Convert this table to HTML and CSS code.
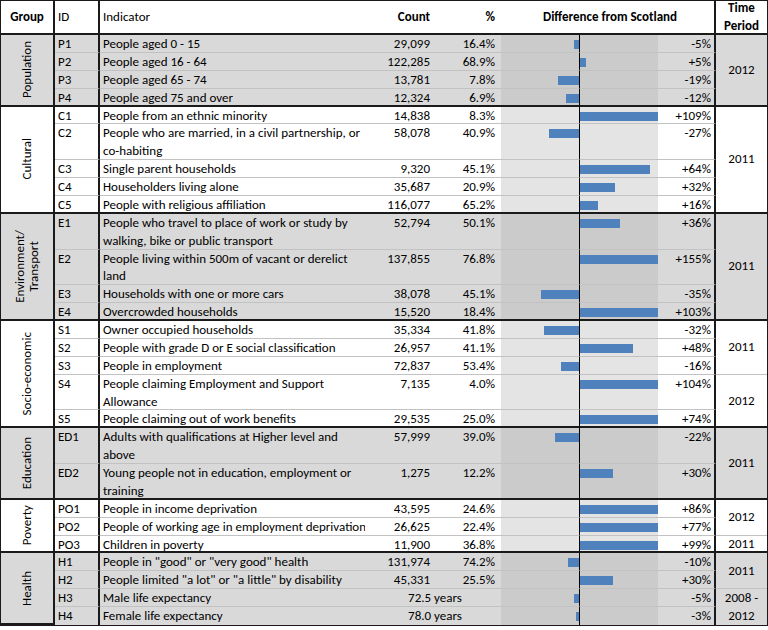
FILE: index.html
```html
<!DOCTYPE html>
<html>
<head>
<meta charset="utf-8">
<link rel="stylesheet" href="styles.css">
</head>
<body>
<div class="tbl">
  <div class="hd hgrp">Group</div>
  <div class="hd hid">ID</div>
  <div class="hd hind">Indicator</div>
  <div class="hd hnum">Count</div>
  <div class="hd hpct">%</div>
  <div class="hd hdiff">Difference from Scotland</div>
  <div class="hd htime">Time<br>Period</div>

  <div class="grp sh">
    <div class="c g" style="grid-row: span 4"><span class="vl">Population</span></div>
    <div class="c id">P1</div><div class="c ind">People aged 0 - 15</div><div class="c num">29,099</div><div class="c pct">16.4%</div><div class="c neg"><i class="bar" style="width:5.5px"></i></div><div class="c pos"></div><div class="c dt">-5%</div>
    <div class="c tp last" style="grid-row: span 4">2012</div>
    <div class="c id">P2</div><div class="c ind">People aged 16 - 64</div><div class="c num">122,285</div><div class="c pct">68.9%</div><div class="c neg"></div><div class="c pos"><i class="bar" style="width:5.5px"></i></div><div class="c dt">+5%</div>
    <div class="c id">P3</div><div class="c ind">People aged 65 - 74</div><div class="c num">13,781</div><div class="c pct">7.8%</div><div class="c neg"><i class="bar" style="width:20.9px"></i></div><div class="c pos"></div><div class="c dt">-19%</div>
    <div class="c id last">P4</div><div class="c ind last">People aged 75 and over</div><div class="c num last">12,324</div><div class="c pct last">6.9%</div><div class="c neg last"><i class="bar" style="width:13.2px"></i></div><div class="c pos last"></div><div class="c dt last">-12%</div>
  </div>

  <div class="grp wh">
    <div class="c g" style="grid-row: span 6"><span class="vl">Cultural</span></div>
    <div class="c id">C1</div><div class="c ind">People from an ethnic minority</div><div class="c num">14,838</div><div class="c pct">8.3%</div><div class="c neg"></div><div class="c pos"><i class="bar" style="width:78px"></i></div><div class="c dt">+109%</div>
    <div class="c tp last" style="grid-row: span 6">2011</div>
    <div class="c id r2">C2</div><div class="c ind r2">People who are married, in a civil partnership, or<br>co-habiting</div><div class="c num r2">58,078</div><div class="c pct r2">40.9%</div><div class="c neg r2"><i class="bar" style="width:29.7px"></i></div><div class="c pos r2"></div><div class="c dt r2">-27%</div>
    <div class="c id">C3</div><div class="c ind">Single parent households</div><div class="c num">9,320</div><div class="c pct">45.1%</div><div class="c neg"></div><div class="c pos"><i class="bar" style="width:70.4px"></i></div><div class="c dt">+64%</div>
    <div class="c id">C4</div><div class="c ind">Householders living alone</div><div class="c num">35,687</div><div class="c pct">20.9%</div><div class="c neg"></div><div class="c pos"><i class="bar" style="width:35.2px"></i></div><div class="c dt">+32%</div>
    <div class="c id last">C5</div><div class="c ind last">People with religious affiliation</div><div class="c num last">116,077</div><div class="c pct last">65.2%</div><div class="c neg last"></div><div class="c pos last"><i class="bar" style="width:17.6px"></i></div><div class="c dt last">+16%</div>
  </div>

  <div class="grp sh">
    <div class="c g" style="grid-row: span 6"><span class="vl">Environment/<br>Transport</span></div>
    <div class="c id r2">E1</div><div class="c ind r2">People who travel to place of work or study by<br>walking, bike or public transport</div><div class="c num r2">52,794</div><div class="c pct r2">50.1%</div><div class="c neg r2"></div><div class="c pos r2"><i class="bar" style="width:39.6px"></i></div><div class="c dt r2">+36%</div>
    <div class="c tp last" style="grid-row: span 6">2011</div>
    <div class="c id r2">E2</div><div class="c ind r2">People living within 500m of vacant or derelict<br>land</div><div class="c num r2">137,855</div><div class="c pct r2">76.8%</div><div class="c neg r2"></div><div class="c pos r2"><i class="bar" style="width:78px"></i></div><div class="c dt r2">+155%</div>
    <div class="c id">E3</div><div class="c ind">Households with one or more cars</div><div class="c num">38,078</div><div class="c pct">45.1%</div><div class="c neg"><i class="bar" style="width:38.5px"></i></div><div class="c pos"></div><div class="c dt">-35%</div>
    <div class="c id last">E4</div><div class="c ind last">Overcrowded households</div><div class="c num last">15,520</div><div class="c pct last">18.4%</div><div class="c neg last"></div><div class="c pos last"><i class="bar" style="width:78px"></i></div><div class="c dt last">+103%</div>
  </div>

  <div class="grp wh">
    <div class="c g" style="grid-row: span 6"><span class="vl">Socio-economic</span></div>
    <div class="c id">S1</div><div class="c ind">Owner occupied households</div><div class="c num">35,334</div><div class="c pct">41.8%</div><div class="c neg"><i class="bar" style="width:35.2px"></i></div><div class="c pos"></div><div class="c dt">-32%</div>
    <div class="c tp" style="grid-row: span 3">2011</div>
    <div class="c id">S2</div><div class="c ind">People with grade D or E social classification</div><div class="c num">26,957</div><div class="c pct">41.1%</div><div class="c neg"></div><div class="c pos"><i class="bar" style="width:52.8px"></i></div><div class="c dt">+48%</div>
    <div class="c id">S3</div><div class="c ind">People in employment</div><div class="c num">72,837</div><div class="c pct">53.4%</div><div class="c neg"><i class="bar" style="width:17.6px"></i></div><div class="c pos"></div><div class="c dt">-16%</div>
    <div class="c id r2">S4</div><div class="c ind r2">People claiming Employment and Support<br>Allowance</div><div class="c num r2">7,135</div><div class="c pct r2">4.0%</div><div class="c neg r2"></div><div class="c pos r2"><i class="bar" style="width:78px"></i></div><div class="c dt r2">+104%</div>
    <div class="c tp last" style="grid-row: span 3">2012</div>
    <div class="c id last">S5</div><div class="c ind last">People claiming out of work benefits</div><div class="c num last">29,535</div><div class="c pct last">25.0%</div><div class="c neg last"></div><div class="c pos last"><i class="bar" style="width:78px"></i></div><div class="c dt last">+74%</div>
  </div>

  <div class="grp sh">
    <div class="c g" style="grid-row: span 4"><span class="vl">Education</span></div>
    <div class="c id r2">ED1</div><div class="c ind r2">Adults with qualifications at Higher level and<br>above</div><div class="c num r2">57,999</div><div class="c pct r2">39.0%</div><div class="c neg r2"><i class="bar" style="width:24.2px"></i></div><div class="c pos r2"></div><div class="c dt r2">-22%</div>
    <div class="c tp last" style="grid-row: span 4">2011</div>
    <div class="c id r2 last">ED2</div><div class="c ind r2 last">Young people not in education, employment or<br>training</div><div class="c num r2 last">1,275</div><div class="c pct r2 last">12.2%</div><div class="c neg r2 last"></div><div class="c pos r2 last"><i class="bar" style="width:33px"></i></div><div class="c dt r2 last">+30%</div>
  </div>

  <div class="grp wh">
    <div class="c g" style="grid-row: span 3"><span class="vl">Poverty</span></div>
    <div class="c id">PO1</div><div class="c ind">People in income deprivation</div><div class="c num">43,595</div><div class="c pct">24.6%</div><div class="c neg"></div><div class="c pos"><i class="bar" style="width:78px"></i></div><div class="c dt">+86%</div>
    <div class="c tp" style="grid-row: span 2">2012</div>
    <div class="c id">PO2</div><div class="c ind">People of working age in employment deprivation</div><div class="c num">26,625</div><div class="c pct">22.4%</div><div class="c neg"></div><div class="c pos"><i class="bar" style="width:78px"></i></div><div class="c dt">+77%</div>
    <div class="c id last">PO3</div><div class="c ind last">Children in poverty</div><div class="c num last">11,900</div><div class="c pct last">36.8%</div><div class="c neg last"></div><div class="c pos last"><i class="bar" style="width:78px"></i></div><div class="c dt last">+99%</div>
    <div class="c tp last">2011</div>
  </div>

  <div class="grp sh">
    <div class="c g end" style="grid-row: span 4"><span class="vl">Health</span></div>
    <div class="c id">H1</div><div class="c ind">People in "good" or "very good" health</div><div class="c num">131,974</div><div class="c pct">74.2%</div><div class="c neg"><i class="bar" style="width:11px"></i></div><div class="c pos"></div><div class="c dt">-10%</div>
    <div class="c tp" style="grid-row: span 2">2011</div>
    <div class="c id">H2</div><div class="c ind">People limited "a lot" or "a little" by disability</div><div class="c num">45,331</div><div class="c pct">25.5%</div><div class="c neg"></div><div class="c pos"><i class="bar" style="width:33px"></i></div><div class="c dt">+30%</div>
    <div class="c id">H3</div><div class="c ind">Male life expectancy</div><div class="c yrs">72.5 years</div><div class="c neg"><i class="bar" style="width:5.5px"></i></div><div class="c pos"></div><div class="c dt">-5%</div>
    <div class="c tp end" style="grid-row: span 2">2008 -<br>2012</div>
    <div class="c id end">H4</div><div class="c ind end">Female life expectancy</div><div class="c yrs end">78.0 years</div><div class="c neg end"><i class="bar" style="width:3.3px"></i></div><div class="c pos end"></div><div class="c dt end">-3%</div>
  </div>
</div>
</body>
</html>
```
FILE: styles.css
```css
html, body {
  margin: 0;
  padding: 0;
  background: #ffffff;
}

.tbl {
  box-sizing: border-box;
  width: 768px;
  border: 1px solid #1a1a1a;
  display: grid;
  grid-template-columns: 54px 45px 265px 67px 69px 79px 78px 58px 51px;
  grid-template-rows: 34px;
  grid-auto-rows: 17.88px;
  font-family: Carlito, Lato, "Liberation Sans", sans-serif;
  font-size: 13px;
  color: #000;
}

.grp {
  display: contents;
}

.hd {
  box-sizing: border-box;
  border-bottom: 2px solid #1a1a1a;
  display: flex;
  align-items: center;
  font-weight: bold;
  line-height: 17.88px;
  padding: 0 3px;
  white-space: nowrap;
}

.hgrp { justify-content: center; border-right: 2px solid #1a1a1a; }
.hid { font-weight: normal; border-right: 2px solid #1a1a1a; }
.hind { font-weight: normal; }
.hnum { justify-content: flex-end; padding-right: 2px; }
.hpct { justify-content: flex-end; padding-right: 6px; }
.hdiff { grid-column: span 3; justify-content: center; border-right: 2px solid #1a1a1a; padding-left: 8px; }
.htime { justify-content: center; text-align: center; }

.c {
  box-sizing: border-box;
  border-bottom: 1px solid #c2c2c2;
  padding: 0 3px;
  line-height: 17.88px;
  white-space: nowrap;
  overflow: hidden;
}

.r2 { grid-row: span 2; }

.last { border-bottom: 2px solid #1a1a1a; }
.end { border-bottom: none; }

.g {
  border-right: 2px solid #1a1a1a;
  border-bottom: 2px solid #1a1a1a;
  display: flex;
  align-items: center;
  justify-content: center;
  padding: 0;
}

.vl {
  writing-mode: vertical-rl;
  transform: rotate(180deg);
  text-align: center;
  line-height: 14px;
}

.id { border-right: 2px solid #1a1a1a; }

.num { text-align: right; padding-right: 2px; }
.pct { text-align: right; padding-right: 6px; }
.yrs { grid-column: span 2; text-align: center; padding: 0 0 0 4px; }

.neg {
  padding: 0;
  display: flex;
  justify-content: flex-end;
  align-items: flex-start;
  border-right: 1px solid #000;
}

.pos {
  padding: 0;
  display: flex;
  justify-content: flex-start;
  align-items: flex-start;
}

.bar {
  display: block;
  flex: none;
  height: 9px;
  margin-top: 5px;
  background: #4f81bd;
}

.dt {
  text-align: right;
  padding-right: 3px;
  border-right: 2px solid #1a1a1a;
}

.tp {
  display: flex;
  align-items: center;
  justify-content: center;
  text-align: center;
}

.sh > .c { background: #d9d9d9; }
.sh > .neg, .sh > .pos { background: #cbcbcb; }
.wh > .neg, .wh > .pos { background: #e4e4e4; }
```
